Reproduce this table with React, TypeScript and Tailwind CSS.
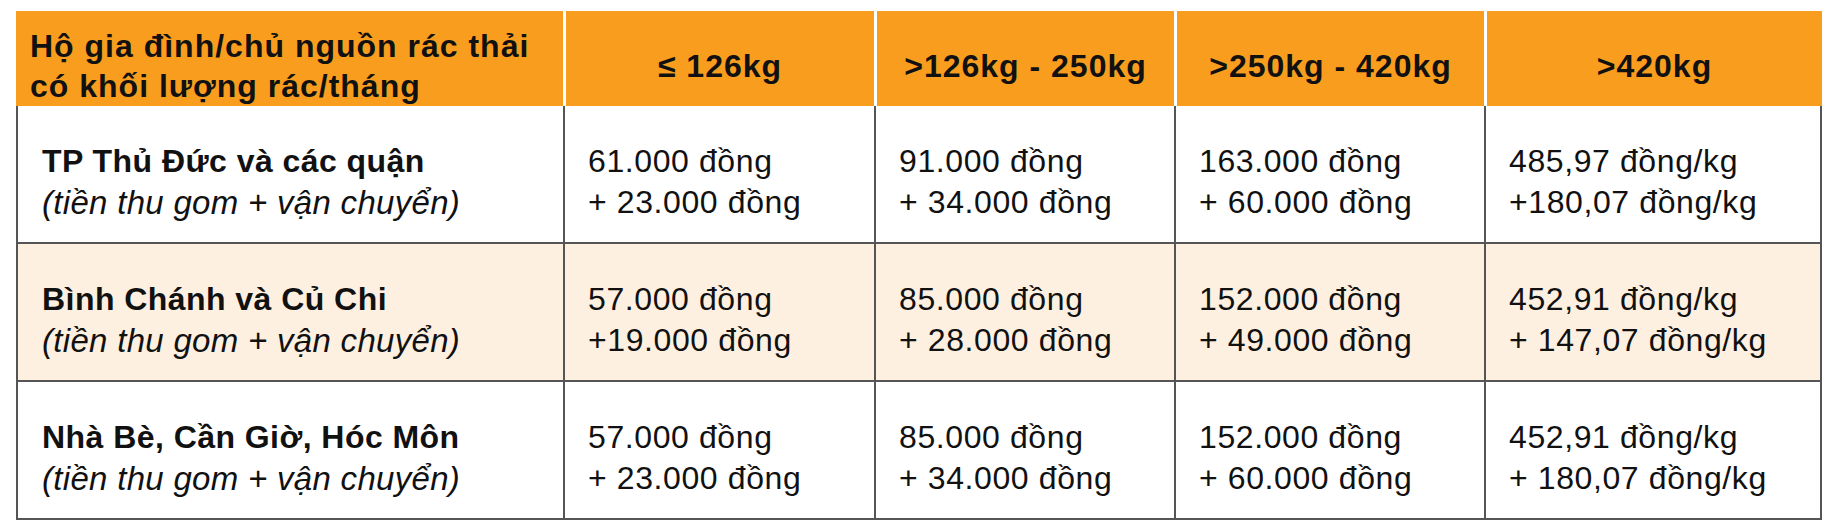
const heads = ['≤ 126kg', '>126kg - 250kg', '>250kg - 420kg', '>420kg']

const rows = [
	{
		name: 'TP Thủ Đức và các quận',
		bg: 'bg-white',
		cells: [
			['61.000 đồng', '+ 23.000 đồng'],
			['91.000 đồng', '+ 34.000 đồng'],
			['163.000 đồng', '+ 60.000 đồng'],
			['485,97 đồng/kg', '+180,07 đồng/kg'],
		],
	},
	{
		name: 'Bình Chánh và Củ Chi',
		bg: 'bg-[#fef0e0]',
		cells: [
			['57.000 đồng', '+19.000 đồng'],
			['85.000 đồng', '+ 28.000 đồng'],
			['152.000 đồng', '+ 49.000 đồng'],
			['452,91 đồng/kg', '+ 147,07 đồng/kg'],
		],
	},
	{
		name: 'Nhà Bè, Cần Giờ, Hóc Môn',
		bg: 'bg-white',
		cells: [
			['57.000 đồng', '+ 23.000 đồng'],
			['85.000 đồng', '+ 34.000 đồng'],
			['152.000 đồng', '+ 60.000 đồng'],
			['452,91 đồng/kg', '+ 180,07 đồng/kg'],
		],
	},
]

function App() {
	return (
		<div
			className="min-h-screen w-screen bg-white pt-[11px] pl-[16px] text-[#111]"
			style={{ fontFamily: '"Liberation Sans", Arial, sans-serif' }}
		>
			<div className="w-[1806px]">
				{/* header */}
				<div className="grid h-[95px] grid-cols-[547px_311px_300px_310px_338px] bg-[#f99d1f] pt-[15px] text-[32px] font-bold leading-[40px] tracking-[1px]">
					<div className="flex items-center pl-[14px]">
						<div>
							Hộ gia đình/chủ nguồn rác thải
							<br />
							có khối lượng rác/tháng
						</div>
					</div>
					{heads.map((h) => (
						<div
							key={h}
							className="-mt-[15px] flex items-center justify-center border-l-[3px] border-white pt-[15px]"
						>
							{h}
						</div>
					))}
				</div>

				{/* body */}
				<div className="border-x-2 border-[#555]">
					{rows.map((r) => (
						<div
							key={r.name}
							className={`grid h-[138px] grid-cols-[545px_311px_300px_310px_336px] border-b-2 border-[#555] ${r.bg}`}
						>
							<div className="flex items-center pt-4 pl-6 leading-[41px]">
								<div>
									<div className="text-[32px] font-bold tracking-[0.45px]">{r.name}</div>
									<div className="text-[33px] italic tracking-[0.3px]">
										(tiền thu gom + vận chuyển)
									</div>
								</div>
							</div>
							{r.cells.map((c, i) => (
								<div
									key={i}
									className="flex items-center border-l-2 border-[#555] pt-4 pl-[23px] text-[32px] leading-[41px] tracking-[0.6px]"
								>
									<div>
										<div>{c[0]}</div>
										<div>{c[1]}</div>
									</div>
								</div>
							))}
						</div>
					))}
				</div>
			</div>
		</div>
	)
}

export default App
